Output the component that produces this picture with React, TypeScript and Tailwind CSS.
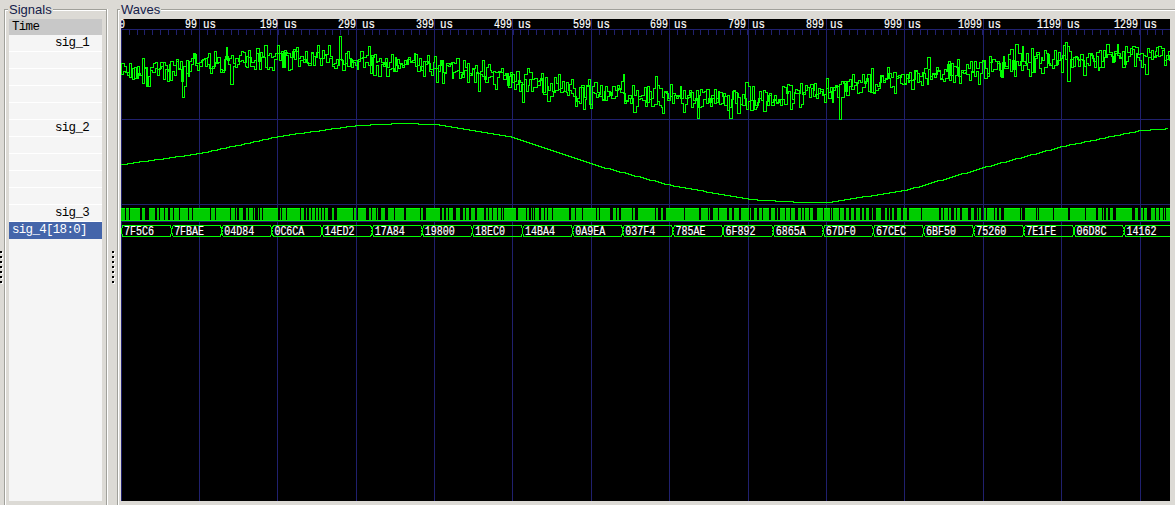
const GRID = [199.5, 277.5, 356.5, 434.5, 512.5, 591.5, 669.5, 748.5, 826.5, 904.5, 983.5, 1061.5, 1140.5];
const H_LINES = [29.5, 119.5, 204.5, 221.5];

const RULER = [
  { t: '0', x: 119 },
  { t: '99', x: 185 },
  { t: '199', x: 260 },
  { t: '299', x: 338 },
  { t: '399', x: 416 },
  { t: '499', x: 494 },
  { t: '599', x: 573 },
  { t: '699', x: 650 },
  { t: '799', x: 728 },
  { t: '899', x: 806 },
  { t: '999', x: 884 },
  { t: '1099', x: 958 },
  { t: '1199', x: 1037 },
  { t: '1299', x: 1114 },
];

const BUS = [
  '7F5C6', '7FBAE', '04D84', '0C6CA', '14ED2', '17A84', '19800', '18EC0', '14BA4', '0A9EA', '037F4',
  '785AE', '6F892', '6865A', '67DF0', '67CEC', '6BF50', '75260', '7E1FE', '06D8C', '14162',
];

const SIG1_BASE = [
  [121, 72], [160, 70], [199, 64], [280, 58], [356, 62], [434, 65], [512, 78], [591, 93], [669, 97],
  [748, 98], [826, 92], [870, 82], [904, 80], [983, 68], [1061, 58], [1140, 57], [1170, 58],
];
const SIG2_BASE = [
  [121, 164], [199, 153], [277, 136], [356, 125], [400, 123], [434, 124], [512, 137], [591, 164], [669, 185],
  [748, 199], [800, 202], [826, 202], [904, 190], [983, 167], [1061, 146], [1140, 130], [1170, 128],
];

function rng(seed: number) {
  let s = seed;
  return () => {
    s = (s + 0x6d2b79f5) | 0;
    let t = Math.imul(s ^ (s >>> 15), 1 | s);
    t = (t + Math.imul(t ^ (t >>> 7), 61 | t)) ^ t;
    return ((t ^ (t >>> 14)) >>> 0) / 4294967296;
  };
}

function interp(pts: number[][], x: number) {
  for (let i = 1; i < pts.length; i++) {
    if (x <= pts[i][0]) {
      const [x0, y0] = pts[i - 1];
      const [x1, y1] = pts[i];
      return y0 + ((y1 - y0) * (x - x0)) / (x1 - x0);
    }
  }
  return pts[pts.length - 1][1];
}

// two overlaid traces give the mix of thin spikes and solid blocks of the noisy signal
function noisyPath(seed: number, step: number) {
  const r = rng(seed);
  let d = 'M121 72.5';
  for (let x = 121; x < 1170; x += step) {
    let n = (r() + r() + r() - 1.5) * 13;
    if (r() < 0.05) n += r() < 0.6 ? 10 + r() * 9 : -9 - r() * 7;
    d += `H${Math.round(x) + 0.5}V${Math.round(interp(SIG1_BASE, x) + n) + 0.5}`;
  }
  return d + 'H1170';
}

function smoothPath() {
  let d = 'M121 164.5';
  for (let x = 121; x <= 1170; x += 3) {
    d += `H${x}V${Math.round(interp(SIG2_BASE, x)) + 0.5}`;
  }
  return d;
}

// sig_3 is a fast digital line: high runs broken by short low gaps
function digitalRuns() {
  const r = rng(37);
  const runs: { x: number; w: number }[] = [];
  let x = 121;
  while (x < 1170) {
    const dense = x > 700 && x < 900;
    const w = r() < 0.6 ? 1 + Math.floor(r() * 4) : 3 + Math.floor(r() * (dense ? 6 : 16));
    runs.push({ x, w: Math.min(w, 1170 - x) });
    x += w + 1 + Math.floor(r() * r() * 4);
  }
  return runs;
}

const RUNS = digitalRuns();
const TICKS = Array.from({ length: 134 }, (_, i) => Math.round(121 + i * 7.83) + 0.5);

function Waves() {
  return (
    <svg
      viewBox="121 19 1049 482"
      className="block h-[482px] w-[1049px] bg-black"
      shapeRendering="crispEdges"
      fontFamily='"Liberation Mono", monospace'
    >
      <line x1="121.5" x2="121.5" y1="19" y2="501" stroke="#20206e" />
      {GRID.map((x) => (
        <line key={x} x1={x} x2={x} y1="19" y2="501" stroke="#20206e" />
      ))}
      {H_LINES.map((y) => (
        <line key={y} x1="121" x2="1170" y1={y} y2={y} stroke="#20206e" />
      ))}
      {TICKS.map((x) => (
        <line key={x} x1={x} x2={x} y1="29" y2="35" stroke="#20206e" />
      ))}

      {RULER.map((r) => (
        <text key={r.t} y="28" fontSize="12" fill="#fff" stroke="#fff" strokeWidth="0.2">
          <tspan x={r.x} textLength={r.t.length * 6} lengthAdjust="spacingAndGlyphs">
            {r.t}
          </tspan>
          {r.t !== '0' && (
            <tspan x={r.x + r.t.length * 6 + 6} textLength={13} lengthAdjust="spacingAndGlyphs">
              us
            </tspan>
          )}
        </text>
      ))}

      <path d={noisyPath(11, 1.9)} fill="none" stroke="#00ff00" />
      <path d={noisyPath(23, 2.6)} fill="none" stroke="#00ff00" />
      <path d={smoothPath()} fill="none" stroke="#00ff00" />

      <line x1="121" x2="1170" y1="220.5" y2="220.5" stroke="#00ff00" />
      {RUNS.map((run) => (
        <g key={run.x}>
          <rect x={run.x} y="208" width={run.w} height="12" fill="#00cc00" />
          <rect x={run.x} y="208" width={run.w} height="1" fill="#00ff00" />
        </g>
      ))}

      {BUS.map((label, i) => {
        const a = 121.5 + i * 50.13;
        const b = 121.5 + (i + 1) * 50.13;
        const last = i === BUS.length - 1;
        const right = last ? 'L1170 225.5M1170 236.5' : `L${b - 1.5} 225.5L${b + 0.5} 231L${b - 1.5} 236.5`;
        return (
          <g key={label}>
            <path
              d={`M${a - 0.5} 231L${a + 1.5} 225.5${right}L${a + 1.5} 236.5L${a - 0.5} 231`}
              fill="none"
              stroke="#00ff00"
            />
            <text
              x={a + 2.5}
              y="235"
              fontSize="12"
              fill="#fff"
              stroke="#fff"
              strokeWidth="0.2"
              textLength={30}
              lengthAdjust="spacingAndGlyphs"
            >
              {label}
            </text>
          </g>
        );
      })}
    </svg>
  );
}

const ROWS = ['sig_1', '', '', '', '', 'sig_2', '', '', '', '', 'sig_3'];

function SignalList() {
  return (
    <div className="flex h-[482px] w-[93px] flex-col bg-[#f5f5f5] font-['Liberation_Mono',monospace] text-[12.5px] tracking-[-0.7px] text-black">
      <div className="flex h-4 items-center bg-[#c8c8c8] pl-[3px]">Time</div>
      {ROWS.map((name, i) => (
        <div key={i} className="flex h-[17px] items-center border-b border-white pl-[46px]">
          {name}
        </div>
      ))}
      <div className="flex h-[17px] items-center bg-[#4465aa] pl-[3px] text-white">sig_4[18:0]</div>
    </div>
  );
}

function Grip() {
  return (
    <div className="flex flex-col gap-[3px]">
      {[0, 1, 2, 3, 4, 5, 6].map((i) => (
        <div key={i} className="h-[2px] w-[2px] bg-black shadow-[1px_1px_0_#fff]" />
      ))}
    </div>
  );
}

export default function App() {
  return (
    <div className="flex h-[505px] w-[1175px] overflow-hidden bg-[#dcdad5] font-['Liberation_Sans',sans-serif] text-[13px] text-[#14204a]">
      <div className="flex w-[4px] shrink-0 flex-col pt-[251px]">
        <Grip />
      </div>

      <div className="relative mt-[9px] h-[496px] w-[103px] shrink-0 border-x border-t border-x-[#a0a09a] border-t-[#a0a09a] pl-[4px] pt-[9px] shadow-[inset_1px_1px_0_#fff,1px_0_0_#fff]">
        <span className="absolute -top-[9px] left-[3px] bg-[#dcdad5] px-[1px] leading-[17px]">Signals</span>
        <SignalList />
      </div>

      <div className="flex w-[10px] shrink-0 flex-col items-center pt-[251px] pl-[1px]">
        <Grip />
      </div>

      <div className="relative mt-[9px] h-[496px] grow border-l border-t border-[#a0a09a] pl-[3px] pt-[9px] shadow-[inset_1px_1px_0_#fff]">
        <span className="absolute -top-[9px] left-[2px] bg-[#dcdad5] px-[1px] leading-[17px]">Waves</span>
        <Waves />
      </div>
    </div>
  );
}
